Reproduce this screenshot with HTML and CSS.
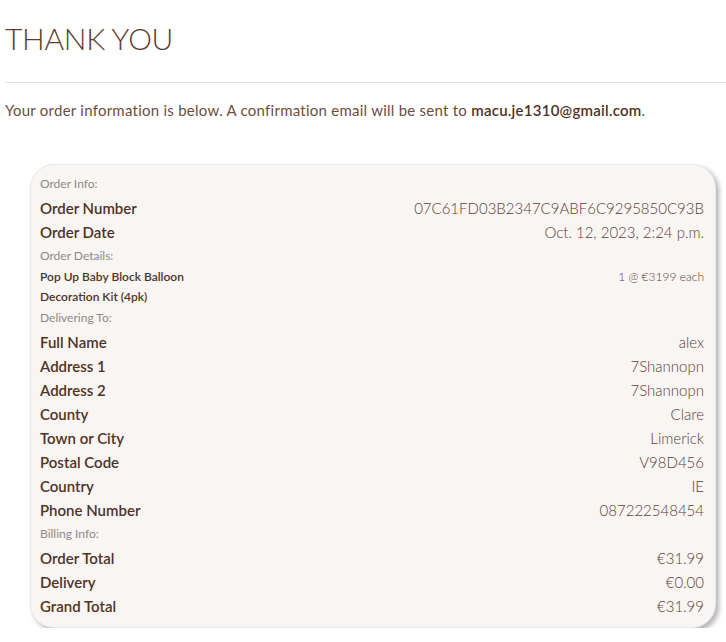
FILE: index.html
```html
<!DOCTYPE html>
<html lang="en">
<head>
<meta charset="utf-8">
<title>Thank You</title>
<link rel="stylesheet" href="styles.css">
</head>
<body>
<main class="page">
  <h1 class="title">THANK YOU</h1>
  <hr class="rule">
  <p class="intro">Your order information is below. A confirmation email will be sent to <strong>macu.je1310@gmail.com</strong>.</p>
  <section class="card">
    <div class="section">Order Info:</div>
    <div class="row"><span class="label">Order Number</span><span class="value">07C61FD03B2347C9ABF6C9295850C93B</span></div>
    <div class="row"><span class="label">Order Date</span><span class="value">Oct. 12, 2023, 2:24 p.m.</span></div>
    <div class="section">Order Details:</div>
    <div class="item"><span class="item-name">Pop Up Baby Block Balloon<br>Decoration Kit (4pk)</span><span class="item-qty">1 @ €3199 each</span></div>
    <div class="section">Delivering To:</div>
    <div class="row"><span class="label">Full Name</span><span class="value">alex</span></div>
    <div class="row"><span class="label">Address 1</span><span class="value">7Shannopn</span></div>
    <div class="row"><span class="label">Address 2</span><span class="value">7Shannopn</span></div>
    <div class="row"><span class="label">County</span><span class="value">Clare</span></div>
    <div class="row"><span class="label">Town or City</span><span class="value">Limerick</span></div>
    <div class="row"><span class="label">Postal Code</span><span class="value">V98D456</span></div>
    <div class="row"><span class="label">Country</span><span class="value">IE</span></div>
    <div class="row"><span class="label">Phone Number</span><span class="value">087222548454</span></div>
    <div class="section">Billing Info:</div>
    <div class="row"><span class="label">Order Total</span><span class="value">€31.99</span></div>
    <div class="row"><span class="label">Delivery</span><span class="value">€0.00</span></div>
    <div class="row"><span class="label">Grand Total</span><span class="value">€31.99</span></div>
  </section>
</main>
</body>
</html>
```

FILE: styles.css
```css
* { box-sizing: border-box; }
html, body { margin: 0; padding: 0; background: #fff; }
body {
  font-family: "Lato", "Liberation Sans", sans-serif;
  color: #5b3d31;
  overflow: hidden;
}
.page {
  padding: 0 0 0 5px;
}
.title {
  margin: 0;
  padding-top: 18px;
  font-size: 30px;
  font-weight: 300;
  line-height: 40px;
  letter-spacing: -0.3px;
  color: #5b3d31;
}
.rule {
  margin: 24px 0 0 0;
  border: 0;
  border-top: 1px solid #e3e3e3;
  height: 0;
}
.intro {
  margin: 17px 0 0 0;
  font-size: 15px;
  line-height: 20px;
  font-weight: 400;
  letter-spacing: 0.25px;
  color: #6a4e42;
}
.intro strong { font-weight: 600; color: #4f3228; }
.card {
  margin: 44px 10px 0 25px;
  padding: 7px 11px 9px 9px;
  background: #f8f5f2;
  border: 1px solid #e6e9ee;
  border-radius: 24px;
  box-shadow: 3px 3px 5px rgba(0, 0, 0, 0.3);
}
.section {
  font-size: 12px;
  line-height: 24px;
  color: #8c8a8a;
  font-weight: 400;
}
.row {
  display: flex;
  justify-content: space-between;
  line-height: 24px;
  font-size: 15px;
}
.label { font-weight: 600; color: #4f3228; }
.value { font-weight: 300; color: #5b4037; }
.item {
  display: flex;
  justify-content: space-between;
  font-size: 12px;
  line-height: 20px;
  margin-top: -1px;
  margin-bottom: -1px;
}
.item-name { font-weight: 600; color: #4f3228; }
.item-qty { font-weight: 300; color: #5b4037; }
```
